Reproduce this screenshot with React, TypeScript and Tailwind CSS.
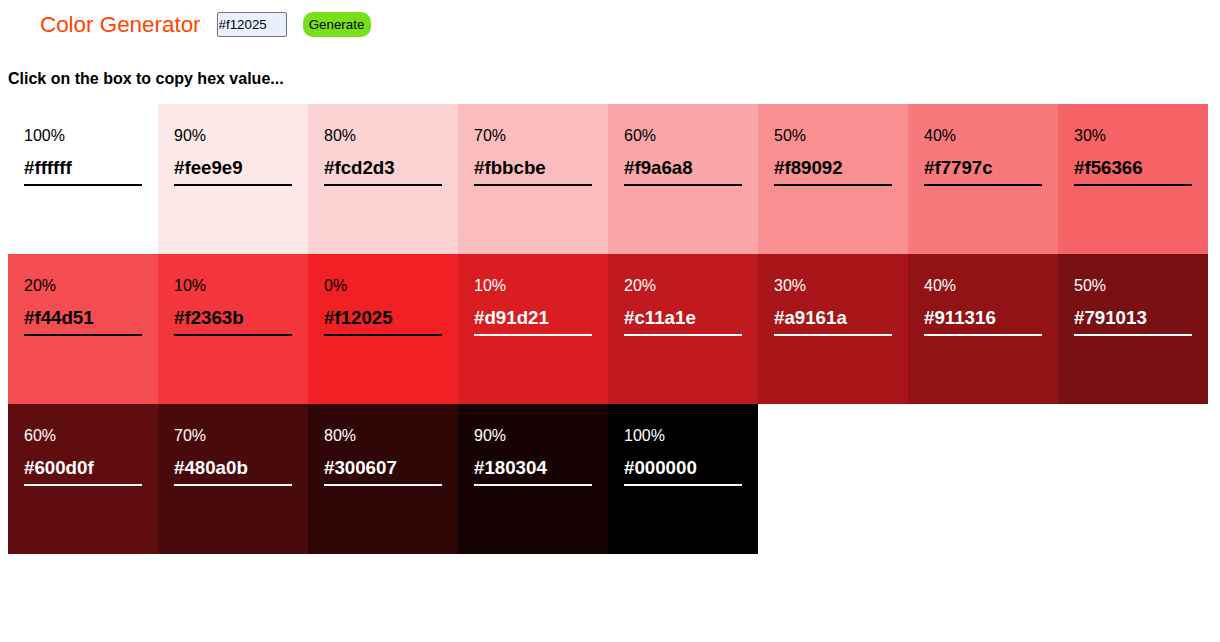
import { useState } from "react";

type Swatch = { hex: string; weight: string; dark: boolean };

const swatches: Swatch[] = [
  ["ffffff", "100%"],
  ["fee9e9", "90%"],
  ["fcd2d3", "80%"],
  ["fbbcbe", "70%"],
  ["f9a6a8", "60%"],
  ["f89092", "50%"],
  ["f7797c", "40%"],
  ["f56366", "30%"],
  ["f44d51", "20%"],
  ["f2363b", "10%"],
  ["f12025", "0%"],
  ["d91d21", "10%"],
  ["c11a1e", "20%"],
  ["a9161a", "30%"],
  ["911316", "40%"],
  ["791013", "50%"],
  ["600d0f", "60%"],
  ["480a0b", "70%"],
  ["300607", "80%"],
  ["180304", "90%"],
  ["000000", "100%"],
].map(([hex, weight], i) => ({ hex: `#${hex}`, weight, dark: i > 10 }));

const ColorBox = ({ swatch }: { swatch: Swatch }) => (
  <div
    className={`h-[150px] w-[150px] cursor-pointer px-4 pt-[23px] ${
      swatch.dark ? "text-white" : "text-black"
    }`}
    style={{ backgroundColor: swatch.hex }}
  >
    <p className="text-base leading-[18px]">{swatch.weight}</p>
    <h3
      className={`mt-[12px] border-b-2 pb-[6px] text-[18.72px] font-bold leading-[21px] ${
        swatch.dark ? "border-white" : "border-black"
      }`}
    >
      {swatch.hex}
    </h3>
  </div>
);

export default function App() {
  const [color, setColor] = useState("#f12025");

  return (
    <div className="min-h-[642px] bg-white font-['Liberation_Sans',Arial,sans-serif] text-black">
      <section className="flex h-[49px] items-center pl-[40px]">
        <h3 className="mr-[16px] text-[22.4px] leading-[25px] text-[#ff4500]">
          Color Generator
        </h3>
        <input
          type="text"
          value={color}
          onChange={(e) => setColor(e.target.value)}
          className="h-[25px] w-[70px] rounded-[2px] border border-[#767676] bg-[#e8f0fe] pl-[1px] text-[13.33px] text-black outline-none"
        />
        <button className="ml-[16px] h-[25px] w-[68px] rounded-[10px] bg-[#77e01a] text-[13.33px] text-black">
          Generate
        </button>
      </section>
      <h4 className="mt-[21px] pl-2 text-base font-bold leading-[18px]">
        Click on the box to copy hex value...
      </h4>
      <section className="mt-[16px] grid grid-cols-[repeat(8,150px)] pl-2">
        {swatches.map((s, i) => (
          <ColorBox key={i} swatch={s} />
        ))}
      </section>
    </div>
  );
}
